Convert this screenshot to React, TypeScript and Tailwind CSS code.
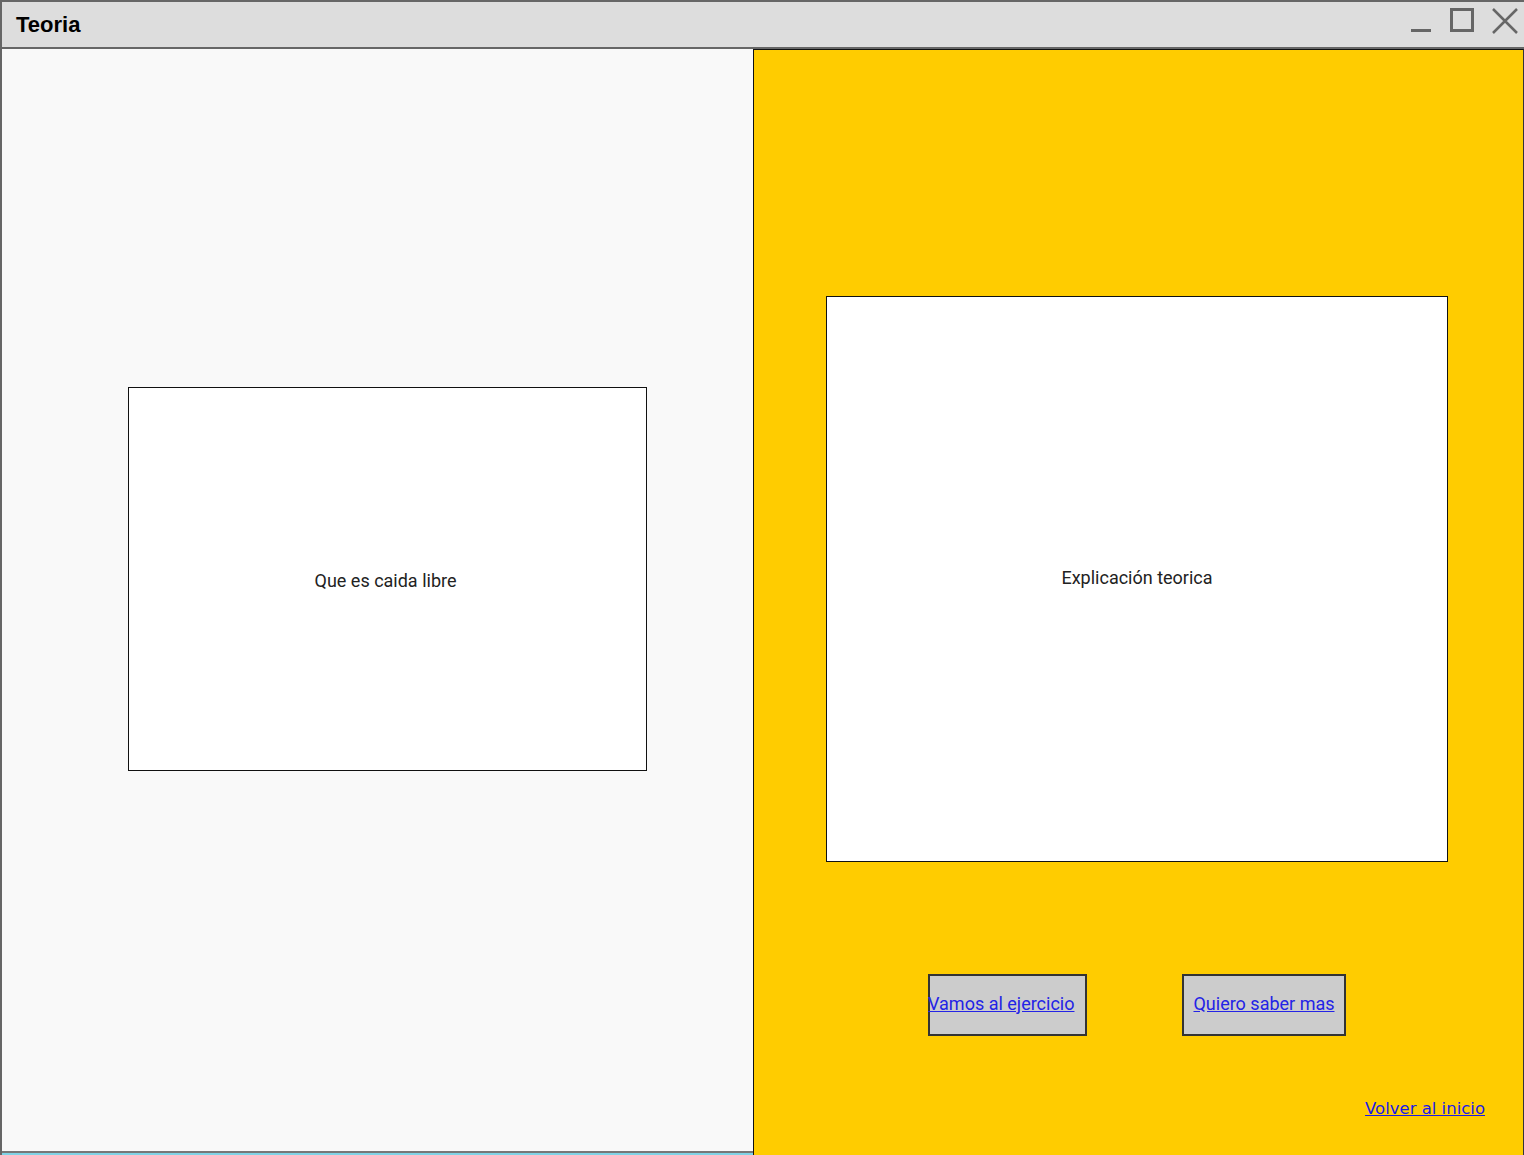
import * as React from "react";

// window controls in the title bar
function WindowControls() {
  return (
    <div className="flex items-start gap-[18px] pr-[6px] self-start pt-[6px]">
      <svg width="22" height="24" viewBox="0 0 22 24">
        <line x1="1" y1="22.5" x2="21" y2="22.5" stroke="#666" strokeWidth="3" />
      </svg>
      <svg width="24" height="24" viewBox="0 0 24 24">
        <rect x="1.5" y="1.5" width="21" height="21" fill="none" stroke="#666" strokeWidth="3" />
      </svg>
      <svg width="26" height="26" viewBox="0 0 26 26">
        <path d="M1 1 L25 25 M25 1 L1 25" stroke="#666" strokeWidth="2.5" />
      </svg>
    </div>
  );
}

function LinkButton({ label, className }: { label: string; className: string }) {
  return (
    <a
      href="#"
      className={
        "flex items-center h-[62px] pb-[4px] bg-[#cccccc] border-2 border-[#333] text-[18px] text-[#2323e6] underline " +
        className
      }
      style={{ fontFamily: "Roboto, sans-serif" }}
    >
      {label}
    </a>
  );
}

export default function App() {
  return (
    <div
      className="w-[1524px] h-[1155px] flex flex-col overflow-hidden bg-[#f9f9f9]"
      style={{ fontFamily: "Roboto, sans-serif" }}
    >
      <div className="h-[49px] flex items-center justify-between bg-[#dddddd] border-t-2 border-l-2 border-b-2 border-[#666]">
        <span
          className="pl-[14px] text-[22px] font-bold text-black"
          style={{ fontFamily: "'Liberation Sans', Arial, sans-serif" }}
        >
          Teoria
        </span>
        <WindowControls />
      </div>

      <div className="flex flex-1 min-h-0">
        {/* left panel */}
        <div className="w-[753px] flex flex-col border-l-2 border-[#666]">
          <div className="flex-1 bg-[#f9f9f9] pl-[126px] pt-[338px] border-b-2 border-[#777]">
            <div className="w-[519px] h-[384px] bg-white border-[1.5px] border-[#111] flex items-center justify-center">
              <span className="text-[18px] text-[#222] mt-[2px] -ml-[4px]">Que es caida libre</span>
            </div>
          </div>
          <div className="h-[2px] bg-[#7fd3e6]" />
        </div>

        {/* right panel */}
        <div className="flex-1 flex flex-col bg-[#ffcc00] border-l-[1.5px] border-t-[1.5px] border-[#111] border-r border-r-[#333]">
          <div className="pl-[72px] pt-[246px]">
            <div className="w-[622px] h-[566px] bg-white border-[1.5px] border-[#111] flex items-center justify-center">
              <span className="text-[18px] text-[#222] -mt-[4px]">Explicación teorica</span>
            </div>
          </div>
          <div className="flex pl-[174px] pt-[112px] gap-[95px]">
            <LinkButton label="Vamos al ejercicio" className="w-[159px] justify-start -indent-[2px]" />
            <LinkButton label="Quiero saber mas" className="w-[164px] justify-center" />
          </div>
          <div className="flex justify-end pr-[38px] pt-[61px]">
            <a
              href="#"
              className="text-[16.5px] text-[#1a1ae6] underline"
              style={{ fontFamily: "'Comic Sans MS', 'DejaVu Sans', sans-serif" }}
            >
              Volver al inicio
            </a>
          </div>
        </div>
      </div>
    </div>
  );
}
